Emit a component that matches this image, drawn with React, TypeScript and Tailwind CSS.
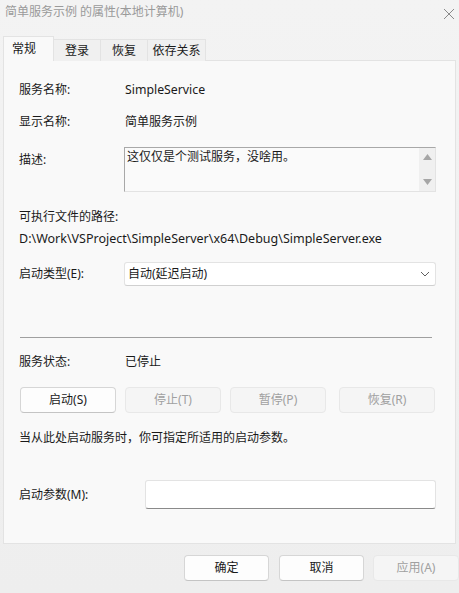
import React from "react";

const font = { fontFamily: '"Noto Sans", "Noto Sans CJK SC", sans-serif' };

function Btn({ label, disabled, w = "w-[96px]" }: { label: string; disabled?: boolean; w?: string }) {
  return (
    <div
      className={
        "h-[26px] rounded-[4px] border flex items-center justify-center text-[12px] " +
        w +
        " " +
        (disabled
          ? "bg-[#f5f5f5] border-[#e8e8e8] text-[#a0a0a0]"
          : "bg-[#fdfdfd] border-[#d6d6d6] border-b-[#c4c4c4] text-[#1a1a1a]")
      }
    >
      {label}
    </div>
  );
}

export default function App() {
  return (
    <div
      className="w-[459px] h-[593px] bg-gradient-to-b from-[#f3f3f3] to-[#eeeeee] flex flex-col text-[#1a1a1a] overflow-hidden"
      style={font}
    >
      {/* title bar */}
      <div className="h-[36px] flex items-start justify-between pl-[5px] pr-[3px] pt-[3px]">
        <span className="text-[12px] text-[#9a9a9a] leading-[18px]">简单服务示例 的属性(本地计算机)</span>
        <svg width="12" height="12" viewBox="0 0 12 12" className="mt-[5px] mr-[1px]">
          <path d="M1 1 L11 11 M11 1 L1 11" stroke="#8a8a8a" strokeWidth="1" />
        </svg>
      </div>
      {/* tabs */}
      <div className="flex items-end pl-[3px] h-[25px] relative z-10">
        <div className="w-[51px] h-[25px] bg-[#f9f9f9] border border-b-0 border-[#e3e3e3] flex items-center pl-[8px] text-[12px]">
          常规
        </div>
        <div className="w-[47px] h-[22px] bg-[#f0f0f0] border border-l-0 border-b-0 border-[#e3e3e3] flex items-center justify-center text-[12px]">
          登录
        </div>
        <div className="w-[47px] h-[22px] bg-[#f0f0f0] border border-l-0 border-b-0 border-[#e3e3e3] flex items-center justify-center text-[12px]">
          恢复
        </div>
        <div className="w-[58px] h-[22px] bg-[#f0f0f0] border border-l-0 border-b-0 border-[#e3e3e3] flex items-center justify-center text-[12px]">
          依存关系
        </div>
      </div>
      {/* panel */}
      <div className="mx-[3px] -mt-px h-[484px] bg-[#f9f9f9] border border-[#e3e3e3] px-[15px] flex flex-col text-[12px]">
        <div className="mt-[20px] h-[18px] flex items-center">
          <span className="w-[106px]">服务名称:</span>
          <span className="text-[12.3px]">SimpleService</span>
        </div>
        <div className="mt-[14px] h-[18px] flex items-center">
          <span className="w-[106px]">显示名称:</span>
          <span>简单服务示例</span>
        </div>
        <div className="mt-[16px] flex items-start">
          <span className="w-[105px] mt-[4px]">描述:</span>
          <div className="w-[312px] h-[45px] border border-[#a8a8a8] border-r-[#e3e3e3] border-b-[#e3e3e3] bg-[#fafafa] flex">
            <div className="flex-1 pl-[2px] pt-[1px] leading-[16px]">这仅仅是个测试服务，没啥用。</div>
            <div className="w-[16px] bg-[#f0f0f0] flex flex-col items-center justify-between py-[6px]">
              <svg width="9" height="6" viewBox="0 0 9 6">
                <path d="M4.5 0 L9 6 L0 6 Z" fill="#a6a6a6" />
              </svg>
              <svg width="9" height="6" viewBox="0 0 9 6">
                <path d="M0 0 L9 0 L4.5 6 Z" fill="#a6a6a6" />
              </svg>
            </div>
          </div>
        </div>
        <div className="mt-[16px] h-[18px] flex items-center">可执行文件的路径:</div>
        <div className="mt-[4px] h-[18px] flex items-center whitespace-nowrap text-[12.5px]">
          D:\Work\VSProject\SimpleServer\x64\Debug\SimpleServer.exe
        </div>
        <div className="mt-[14px] flex items-center">
          <span className="w-[105px]">启动类型(E):</span>
          <div className="w-[312px] h-[24px] rounded-[3px] border border-[#e3e3e3] border-b-[#d0d0d0] bg-white flex items-center justify-between pl-[3px] pr-[5px]">
            <span>自动(延迟启动)</span>
            <svg width="10" height="6" viewBox="0 0 10 6">
              <path d="M1 1 L5 5 L9 1" stroke="#606060" strokeWidth="1" fill="none" />
            </svg>
          </div>
        </div>
        <div className="mt-[51px] w-[412px] h-px bg-[#a0a0a0] ml-px" />
        <div className="mt-[15px] h-[18px] flex items-center">
          <span className="w-[106px]">服务状态:</span>
          <span>已停止</span>
        </div>
        <div className="mt-[16px] flex ml-px">
          <Btn label="启动(S)" />
          <div className="w-[9px]" />
          <Btn label="停止(T)" disabled />
          <div className="w-[9px]" />
          <Btn label="暂停(P)" disabled />
          <div className="w-[13px]" />
          <Btn label="恢复(R)" disabled />
        </div>
        <div className="mt-[16px] h-[18px] flex items-center">当从此处启动服务时，你可指定所适用的启动参数。</div>
        <div className="mt-[33px] flex items-center">
          <span className="w-[126px]">启动参数(M):</span>
          <div className="w-[291px] h-[29px] rounded-[3px] border border-[#e3e3e3] border-b-[#8a8a8a] bg-white" />
        </div>
      </div>
      {/* footer */}
      <div className="mt-[11px] flex pl-[184px]">
        <Btn label="确定" w="w-[85px]" />
        <div className="w-[10px]" />
        <Btn label="取消" w="w-[85px]" />
        <div className="w-[9px]" />
        <Btn label="应用(A)" w="w-[86px]" disabled />
      </div>
    </div>
  );
}
